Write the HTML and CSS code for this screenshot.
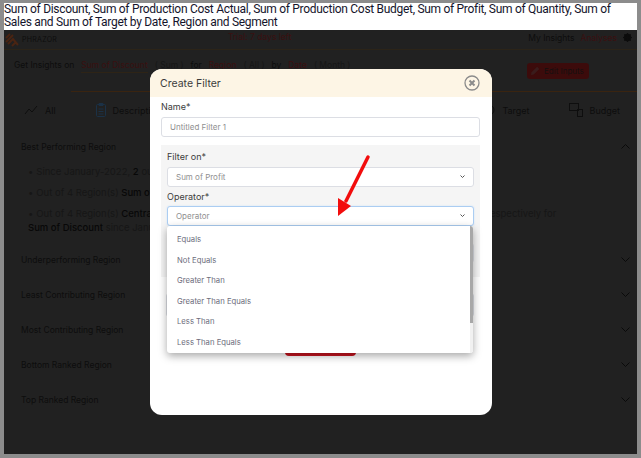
FILE: index.html
```html
<!DOCTYPE html>
<html lang="en">
<head>
    <meta charset="UTF-8">
    <meta name="viewport" content="width=device-width, initial-scale=1.0">
    <title>Create Filter</title>
    <link rel="stylesheet" href="styles.css">
</head>
<body>
    <div class="shot">
        <div class="caption">Sum of Discount, Sum of Production Cost Actual, Sum of Production Cost Budget, Sum of Profit, Sum of Quantity, Sum of Sales and Sum of Target by Date, Region and Segment</div>
        <div class="app">
            <header class="topbar">
                <div class="brand">
                    <svg class="logo" width="14" height="14" viewBox="0 0 14 14" fill="none" stroke="#4a2412" stroke-width="2"><path d="M1 5l4-4M1 9l7-7M3 11l5-5 5 6M7 13l3-3"/></svg>
                    <span>PHRAZOR</span>
                </div>
                <div class="trial">Trial: 7 days left</div>
                <nav class="topnav">
                    <span>My Insights</span>
                    <span class="active">Analyses</span>
                    <svg width="9" height="9" viewBox="0 0 10 10"><circle cx="5" cy="5" r="3" fill="none" stroke="#0c0c0c" stroke-width="2.4"/><path d="M5 0v10M0 5h10M1.5 1.5l7 7M8.5 1.5l-7 7" stroke="#0c0c0c" stroke-width="1.2"/></svg>
                </nav>
            </header>
            <div class="inputs">
                <div class="sentence">
                    <span>Get Insights on</span>
                    <span class="pick">Sum of Discount</span>
                    <span class="paren">( Sum )</span>
                    <span>for</span>
                    <span class="pick">Region</span>
                    <span class="paren">( All )</span>
                    <span>by</span>
                    <span class="pick">Date</span>
                    <span class="paren">( Month )</span>
                </div>
                <div class="edit-btn">
                    <svg width="9" height="9" viewBox="0 0 10 10"><path d="M0 10l.6-3L6.8.8l2.4 2.4L3 9.4z" fill="#3a1c1c"/></svg>
                    Edit Inputs
                </div>
            </div>
            <div class="inputs-rule"></div>
            <div class="tabs">
                <div class="tab">
                    <svg width="14" height="10" viewBox="0 0 14 10" fill="none" stroke="#0e0e0e"><path d="M1 9l4-5 3 3 5-6"/></svg>
                    All
                </div>
                <div class="tab tab-desc">
                    <svg width="10" height="14" viewBox="0 0 10 14" fill="none" stroke="#1b3146"><rect x=".5" y="1.5" width="9" height="12" rx="1"/><path d="M3 .5h4v2H3zM2.5 6h5M2.5 8.5h5M2.5 11h5"/></svg>
                    Descriptive
                </div>
                <div class="tab tab-target">
                    <svg width="12" height="12" viewBox="0 0 12 12" fill="none" stroke="#0e0e0e"><circle cx="6" cy="6" r="5"/><path d="M6 3v6"/></svg>
                    Target
                </div>
                <div class="tab">
                    <svg width="14" height="14" viewBox="0 0 14 14" fill="none" stroke="#0e0e0e"><rect x=".5" y=".5" width="9" height="7"/><rect x="8.5" y="6.5" width="5" height="7"/></svg>
                    Budget
                </div>
            </div>
            <section class="accordion">
                <div class="acc-row">
                    <span>Best Performing Region</span>
                    <svg class="chev" width="9" height="5" viewBox="0 0 9 5" fill="none" stroke="#0a0a0a"><path d="M.5 4.5l4-4 4 4"/></svg>
                </div>
                <ul class="acc-body">
                    <li>Since January-2022, <b>2</b> out of 4 Region(s) have seen an increase</li>
                    <li>Out of 4 Region(s) <b>Sum of Discount</b> for Central is the highest</li>
                    <li>Out of 4 Region(s) <b>Central</b> and West have contributed the most among all Regions, at the top places respectively for<br><b>Sum of Discount</b> since January-2022</li>
                </ul>
                <div class="acc-row">
                    <span>Underperforming Region</span>
                    <svg class="chev" width="9" height="5" viewBox="0 0 9 5" fill="none" stroke="#0a0a0a"><path d="M.5 .5l4 4 4-4"/></svg>
                </div>
                <div class="acc-row">
                    <span>Least Contributing Region</span>
                    <svg class="chev" width="9" height="5" viewBox="0 0 9 5" fill="none" stroke="#0a0a0a"><path d="M.5 .5l4 4 4-4"/></svg>
                </div>
                <div class="acc-row">
                    <span>Most Contributing Region</span>
                    <svg class="chev" width="9" height="5" viewBox="0 0 9 5" fill="none" stroke="#0a0a0a"><path d="M.5 .5l4 4 4-4"/></svg>
                </div>
                <div class="acc-row">
                    <span>Bottom Ranked Region</span>
                    <svg class="chev" width="9" height="5" viewBox="0 0 9 5" fill="none" stroke="#0a0a0a"><path d="M.5 .5l4 4 4-4"/></svg>
                </div>
                <div class="acc-row">
                    <span>Top Ranked Region</span>
                    <svg class="chev" width="9" height="5" viewBox="0 0 9 5" fill="none" stroke="#0a0a0a"><path d="M.5 .5l4 4 4-4"/></svg>
                </div>
            </section>

            <div class="modal">
                <div class="modal-head">
                    <span>Create Filter</span>
                    <svg width="16" height="16" viewBox="0 0 16 16" fill="none" stroke="#8b8b8b"><circle cx="8" cy="8" r="7" stroke-width="1.3"/><path d="M5.5 5.5l5 5M10.5 5.5l-5 5" stroke-width="2"/></svg>
                </div>
                <div class="modal-body">
                    <label class="field-label">Name*</label>
                    <div class="input">Untitled Filter 1</div>
                    <div class="filter-box">
                        <label class="field-label">Filter on*</label>
                        <div class="input select">
                            <span>Sum of Profit</span>
                            <svg width="5" height="4" viewBox="0 0 5 4" fill="none" stroke="#555"><path d="M.5 .5l2 2 2-2"/></svg>
                        </div>
                        <label class="field-label">Operator*</label>
                        <div class="input select focused">
                            <span>Operator</span>
                            <svg width="5" height="4" viewBox="0 0 5 4" fill="none" stroke="#555"><path d="M.5 .5l2 2 2-2"/></svg>
                        </div>
                        <div class="input value"></div>
                    </div>
                    <div class="input desc"></div>
                    <div class="save-btn"></div>
                    <div class="menu">
                        <ul>
                            <li>Equals</li>
                            <li>Not Equals</li>
                            <li>Greater Than</li>
                            <li>Greater Than Equals</li>
                            <li>Less Than</li>
                            <li>Less Than Equals</li>
                        </ul>
                        <div class="scroll-thumb"></div>
                    </div>
                </div>
            </div>
            <svg class="arrow" width="36" height="70" viewBox="0 0 36 70">
                <path d="M33 4L11 48" stroke="#f20d0d" stroke-width="3.5" stroke-linecap="round"/>
                <path d="M3 63L3 45l13 8z" fill="#f20d0d"/>
            </svg>
        </div>
    </div>
</body>
</html>
```

FILE: styles.css
```css
* {
    margin: 0;
    padding: 0;
    box-sizing: border-box;
}

html, body {
    height: 100%;
    overflow: hidden;
}

body {
    background: #8c8c8c;
    font-family: 'Inter', 'Open Sans', sans-serif;
}

.shot {
    padding: 3px 4px 4px;
    height: 458px;
    display: flex;
    flex-direction: column;
}

.caption {
    background: #fff;
    color: #14142b;
    font-family: 'Roboto', sans-serif;
    font-size: 12px;
    line-height: 13px;
    letter-spacing: -0.3px;
    height: 27px;
    flex: none;
}

.app {
    position: relative;
    flex: 1;
    background: #212121;
    color: #0d0d0d;
    font-size: 8.5px;
    overflow: hidden;
}

.topbar {
    height: 20px;
    padding: 0 5px 0 1px;
    display: flex;
    align-items: center;
    justify-content: space-between;
    border-bottom: 1px solid #2c2418;
}

.brand {
    display: flex;
    align-items: center;
    gap: 3px;
    font-size: 7px;
    letter-spacing: 0.3px;
}

.trial {
    color: #3a1010;
    margin: -6px 66px 0 0;
}

.topnav {
    display: flex;
    align-items: center;
    gap: 6px;
    margin-top: -4px;
}

.topnav .active {
    color: #3a1010;
}

.inputs {
    height: 41px;
    padding: 0 48px 0 10px;
    display: flex;
    justify-content: space-between;
    align-items: center;
}

.inputs-rule {
    height: 1px;
    margin-left: 67px;
    background: #3a2410;
}

.sentence {
    display: flex;
    gap: 7px;
    margin-top: -8px;
}

.pick {
    color: #3a1010;
    border-bottom: 1px solid #2e2416;
    padding-bottom: 2px;
}

.paren {
    color: #161616;
}

.edit-btn {
    display: flex;
    align-items: center;
    gap: 4px;
    height: 16px;
    width: 62px;
    background: #3c0b0b;
    color: #141010;
    border-radius: 3px;
    padding: 0 4px;
    font-size: 8px;
    white-space: nowrap;
}

.tabs {
    height: 36px;
    padding: 0 17px 0 20px;
    display: flex;
    align-items: center;
    font-size: 9px;
}

.tab {
    display: flex;
    align-items: center;
    gap: 7px;
}

.tab-desc {
    margin-left: 40px;
}

.tab-target {
    margin-left: auto;
    margin-right: 39px;
}

.accordion {
    padding: 1px 7px 0 17px;
}

.acc-row {
    height: 35px;
    display: flex;
    align-items: center;
    justify-content: space-between;
}

.acc-body {
    list-style: none;
    padding: 1px 0 0 7px;
    height: 78px;
    color: #161616;
    font-size: 9.5px;
    line-height: 14px;
    white-space: nowrap;
}

.acc-body li {
    margin-bottom: 7px;
}

.acc-body li::before {
    content: "\2022";
    margin-right: 3px;
}

.acc-body b {
    color: #080808;
    font-weight: 500;
}

.modal {
    position: absolute;
    left: 146px;
    top: 39px;
    width: 342px;
    height: 346px;
    background: #fff;
    border-radius: 12px;
    overflow: hidden;
    color: #3c3c3c;
}

.modal-head {
    height: 28px;
    padding: 0 12px 0 10px;
    background: #fdf5e5;
    display: flex;
    align-items: center;
    justify-content: space-between;
    font-size: 10.5px;
}

.modal-body {
    position: relative;
    padding: 5px 12px 0 11px;
}

.field-label {
    display: block;
    font-size: 9px;
    line-height: 10px;
    margin-bottom: 5px;
}

.input {
    height: 20px;
    padding: 0 8px;
    background: #fff;
    border: 1px solid #dcdee4;
    border-radius: 3px;
    color: #8f8f8f;
    font-size: 8px;
    display: flex;
    align-items: center;
}

.filter-box {
    margin-top: 8px;
    height: 132px;
    padding: 7px 6px 0;
    background: #f5f5f5;
}

.filter-box .input + .field-label {
    margin-top: 5px;
    margin-bottom: 4px;
}

.select {
    justify-content: space-between;
}

.focused {
    border-color: #abcdf2;
    box-shadow: 0 0 2px #cfe2f8;
}

.value {
    margin-top: 17px;
}

.desc {
    height: 24px;
    margin: 16px 6px 0 5px;
}

.save-btn {
    position: absolute;
    left: 135px;
    top: 248px;
    width: 71px;
    height: 11px;
    background: #c8141f;
    border-radius: 4px;
}

.menu {
    position: absolute;
    left: 17px;
    top: 129px;
    width: 306px;
    height: 127px;
    background: #fff;
    border-radius: 3px;
    box-shadow: 0 3px 8px rgba(0, 0, 0, 0.35);
    overflow: hidden;
}

.menu ul {
    list-style: none;
    padding-top: 3.5px;
    color: #6c6c7c;
    font-size: 7.7px;
    border-right: 3px solid #f1f1f1;
    height: 100%;
}

.menu li {
    height: 20.5px;
    padding-left: 10px;
    display: flex;
    align-items: center;
}

.scroll-thumb {
    position: absolute;
    top: 0;
    right: 0;
    width: 3px;
    height: 97px;
    background: #a8a8a8;
}

.arrow {
    position: absolute;
    left: 331px;
    top: 123px;
}
```
